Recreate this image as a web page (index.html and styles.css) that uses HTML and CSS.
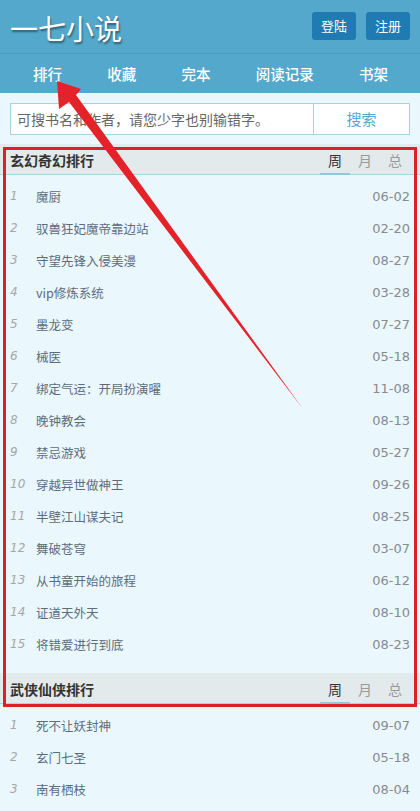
FILE: index.html
```html
<!DOCTYPE html>
<html lang="zh-CN">
<head>
<meta charset="utf-8">
<title>一七小说</title>
<link rel="stylesheet" href="styles.css">
</head>
<body>
<header class="top">
  <div class="brand-bar">
    <h1 class="logo">一七小说</h1>
    <div class="auth">
      <a class="btn">登陆</a>
      <a class="btn">注册</a>
    </div>
  </div>
  <nav class="nav">
    <a>排行</a><a>收藏</a><a>完本</a><a>阅读记录</a><a>书架</a>
  </nav>
</header>

<form class="search">
  <div class="search-input">可搜书名和作者，请您少字也别输错字。</div>
  <div class="search-btn">搜索</div>
</form>

<section class="rank">
  <div class="rank-head">
    <h2>玄幻奇幻排行</h2>
    <div class="tabs"><span class="on">周</span><span>月</span><span>总</span></div>
  </div>
  <ul class="rank-list">
    <li><i>1</i><span class="t">魔厨</span><span class="d">06-02</span></li>
    <li><i>2</i><span class="t">驭兽狂妃魔帝靠边站</span><span class="d">02-20</span></li>
    <li><i>3</i><span class="t">守望先锋入侵美漫</span><span class="d">08-27</span></li>
    <li><i>4</i><span class="t">vip修炼系统</span><span class="d">03-28</span></li>
    <li><i>5</i><span class="t">墨龙变</span><span class="d">07-27</span></li>
    <li><i>6</i><span class="t">械医</span><span class="d">05-18</span></li>
    <li><i>7</i><span class="t">绑定气运：开局扮演曜</span><span class="d">11-08</span></li>
    <li><i>8</i><span class="t">晚钟教会</span><span class="d">08-13</span></li>
    <li><i>9</i><span class="t">禁忌游戏</span><span class="d">05-27</span></li>
    <li><i>10</i><span class="t">穿越异世做神王</span><span class="d">09-26</span></li>
    <li><i>11</i><span class="t">半壁江山谋夫记</span><span class="d">08-25</span></li>
    <li><i>12</i><span class="t">舞破苍穹</span><span class="d">03-07</span></li>
    <li><i>13</i><span class="t">从书童开始的旅程</span><span class="d">06-12</span></li>
    <li><i>14</i><span class="t">证道天外天</span><span class="d">08-10</span></li>
    <li><i>15</i><span class="t">将错爱进行到底</span><span class="d">08-23</span></li>
  </ul>
</section>

<section class="rank">
  <div class="rank-head">
    <h2>武侠仙侠排行</h2>
    <div class="tabs"><span class="on">周</span><span>月</span><span>总</span></div>
  </div>
  <ul class="rank-list">
    <li><i>1</i><span class="t">死不让妖封神</span><span class="d">09-07</span></li>
    <li><i>2</i><span class="t">玄门七圣</span><span class="d">05-18</span></li>
    <li><i>3</i><span class="t">南有栖枝</span><span class="d">08-04</span></li>
  </ul>
</section>

<svg class="annot" width="420" height="811" viewBox="0 0 420 811" aria-hidden="true">
  <rect x="4.5" y="148.5" width="411" height="557" fill="none" stroke="#dd1f26" stroke-width="3"/>
  <polygon points="57,81 81,89 76,95 303,409 69,102 59,109" fill="#e3222a"/>
</svg>
</body>
</html>
```
FILE: styles.css
```css
* { box-sizing: border-box; }
html, body { margin: 0; padding: 0; }
body {
  background: #eaf8fd;
  font-family: "Noto Sans CJK SC", "Noto Sans", sans-serif;
  color: #333;
  position: relative;
  min-height: 811px;
  overflow: hidden;
}
a { text-decoration: none; color: inherit; }
ul { list-style: none; margin: 0; padding: 0; }
h1, h2 { margin: 0; }

.top { background: #54a8cb; }
.brand-bar {
  height: 54px;
  display: flex;
  align-items: center;
  justify-content: space-between;
  padding: 0 10px;
  border-bottom: 1px solid #4b9cbd;
}
.logo {
  font-size: 28px;
  font-weight: normal;
  color: #fff;
  line-height: 1;
  text-shadow: 1px 2px 2px rgba(0, 0, 0, 0.45);
  margin-top: 3px;
}
.auth { display: flex; gap: 10px; margin-top: -1px; }
.btn {
  display: block;
  height: 28px;
  line-height: 28px;
  padding: 0 9px;
  background: #1f7bb1;
  color: #fff;
  font-size: 13px;
  border-radius: 3px;
}
.nav {
  height: 39px;
  display: flex;
  align-items: center;
  justify-content: space-between;
  padding: 0 32px 0 33px;
}
.nav a { color: #fff; font-size: 14.5px; font-weight: 500; }

.search {
  display: flex;
  margin: 10px 10px 0;
  height: 32px;
  border: 1px solid #a8d1e1;
  background: #fff;
}
.search-input {
  flex: 1;
  padding-left: 6px;
  font-size: 14px;
  line-height: 30px;
  color: #666;
  border-right: 1px solid #a8d1e1;
}
.search-btn {
  width: 95px;
  text-align: center;
  font-size: 15px;
  line-height: 30px;
  color: #55a9cc;
}

.rank { margin-top: 9px; }
.rank + .rank { margin-top: 0; }
.rank-head {
  height: 31px;
  background: #e3eaec;
  border-bottom: 1px solid #a9d3e3;
  display: flex;
  align-items: center;
  justify-content: space-between;
  padding-left: 10px;
  padding-right: 10px;
}
.rank-head h2 { font-size: 14px; font-weight: bold; color: #333; margin-top: 2px; }
.tabs { display: flex; align-self: stretch; }
.tabs span {
  width: 30px;
  text-align: center;
  font-size: 14px;
  color: #999;
  display: flex;
  align-items: center;
  justify-content: center;
  padding-top: 2px;
  border-bottom: 2px solid transparent;
  margin-bottom: -1px;
}
.tabs span.on { color: #333; border-bottom-color: #8fc7de; }

.rank-list { padding: 5px 0 13px; }
.rank-list li {
  height: 32px;
  display: flex;
  align-items: center;
  padding: 0 10px;
}
.rank-list i {
  width: 26px;
  font-family: "DejaVu Sans", sans-serif;
  font-style: italic;
  font-size: 12px;
  color: #a6a6a6;
}
.rank-list .t {
  flex: 1;
  font-size: 12.5px;
  color: #5d6c7c;
}
.rank-list .d {
  font-family: "DejaVu Sans", sans-serif;
  font-size: 13px;
  color: #8a8a8a;
}

.annot {
  position: absolute;
  left: 0;
  top: 0;
  pointer-events: none;
}
```
